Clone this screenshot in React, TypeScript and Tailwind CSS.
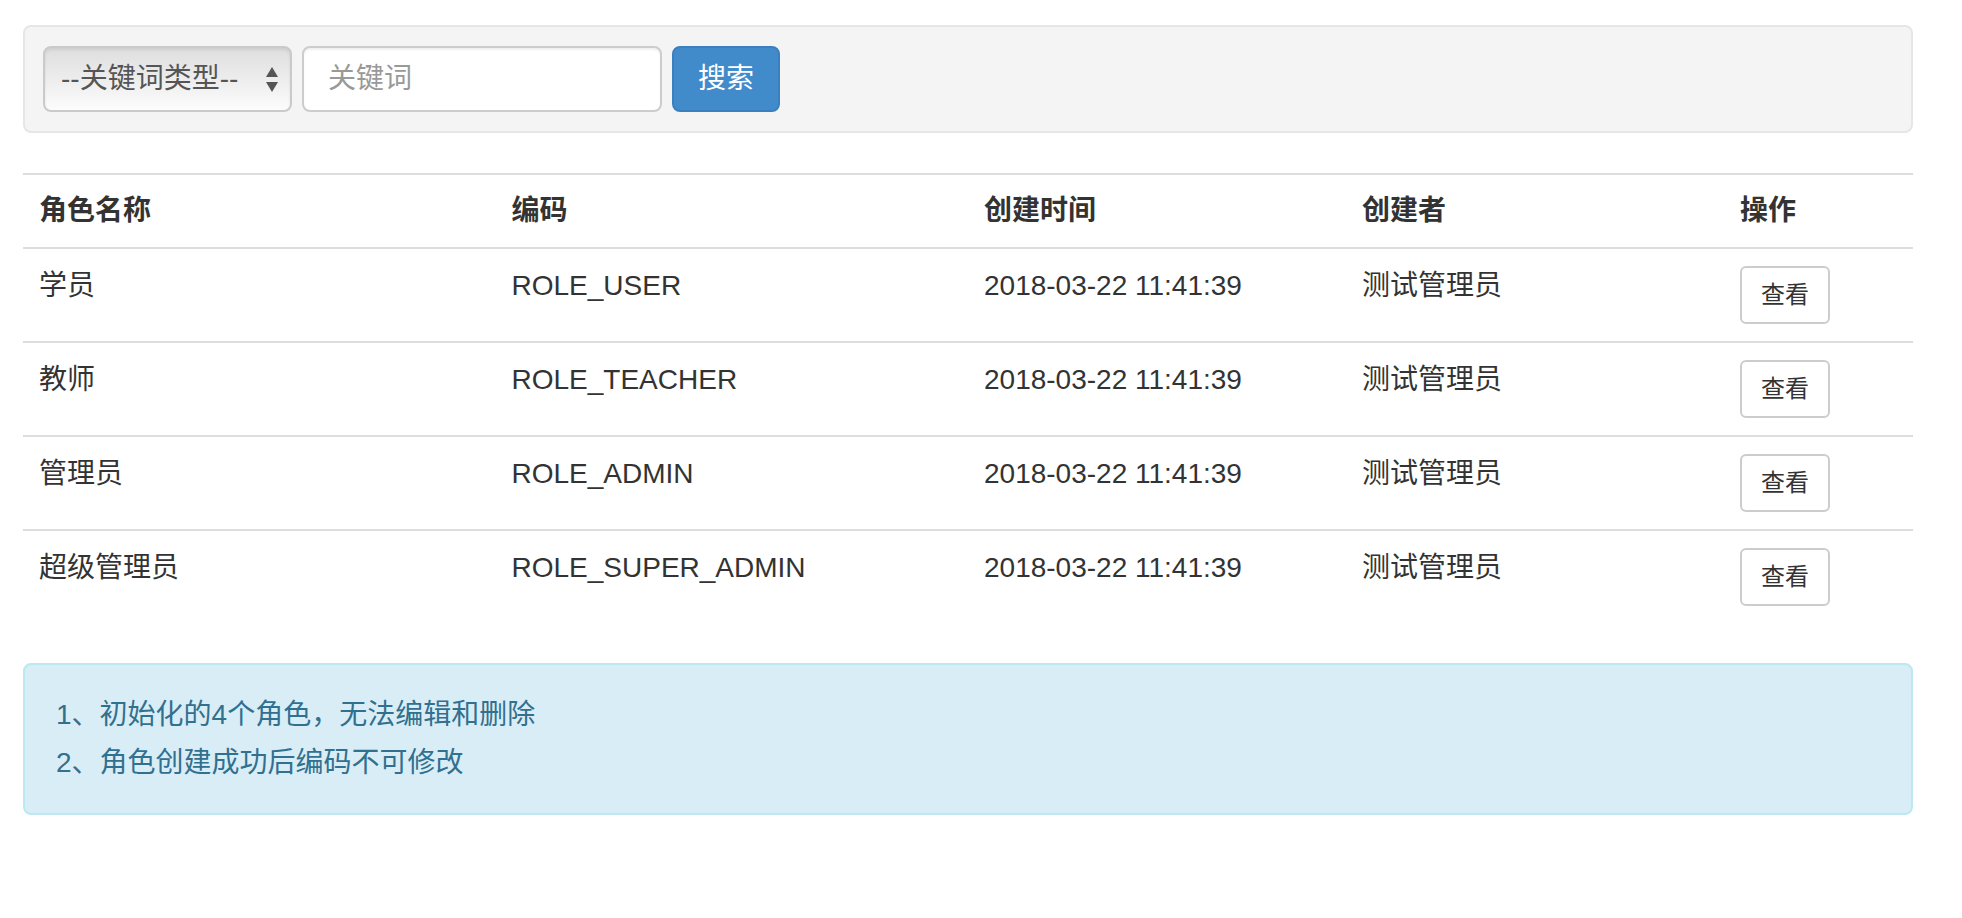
const FONT = {
  fontFamily: '"Liberation Sans", "Noto Sans CJK SC", sans-serif',
};

interface Role {
  name: string;
  code: string;
  createdAt: string;
  creator: string;
}

const roles: Role[] = [
  { name: "学员", code: "ROLE_USER", createdAt: "2018-03-22 11:41:39", creator: "测试管理员" },
  { name: "教师", code: "ROLE_TEACHER", createdAt: "2018-03-22 11:41:39", creator: "测试管理员" },
  { name: "管理员", code: "ROLE_ADMIN", createdAt: "2018-03-22 11:41:39", creator: "测试管理员" },
  { name: "超级管理员", code: "ROLE_SUPER_ADMIN", createdAt: "2018-03-22 11:41:39", creator: "测试管理员" },
];

function SearchBar() {
  return (
    <div className="flex items-center gap-[10px] rounded-lg border-2 border-[#e6e6e6] bg-[#f4f4f4] px-[18px] py-[19px]">
      {/* select, drawn like the native mac one */}
      <div className="relative">
        <select
          className="h-[66px] w-[249px] appearance-none rounded-lg border-2 border-[#cacaca] bg-gradient-to-b from-[#dedede] via-[#ededed] to-[#fcfcfc] pl-[16px] text-[28px] text-[#555] shadow-[inset_0_2px_3px_rgba(0,0,0,0.08)] outline-none"
          style={FONT}
          defaultValue=""
        >
          <option value="">--关键词类型--</option>
          <option value="name">角色名称</option>
          <option value="code">编码</option>
        </select>
        <svg
          className="pointer-events-none absolute right-[14px] top-[21px]"
          width="12"
          height="25"
          viewBox="0 0 12 25"
        >
          <path d="M6 0 L12 10 L0 10 Z" fill="#555" />
          <path d="M0 15 L12 15 L6 25 Z" fill="#555" />
        </svg>
      </div>
      <input
        type="text"
        placeholder="关键词"
        className="h-[66px] w-[360px] rounded-lg border-2 border-[#cccccc] bg-white px-[24px] text-[28px] text-[#555] shadow-[inset_0_2px_2px_rgba(0,0,0,0.06)] outline-none placeholder:text-[#999]"
        style={FONT}
      />
      <button
        type="button"
        className="h-[66px] w-[108px] rounded-lg border-2 border-[#3a80c0] bg-[#428bca] text-[28px] text-white"
        style={FONT}
      >
        搜索
      </button>
    </div>
  );
}

function RoleTable() {
  return (
    <table className="mt-[40px] w-full table-fixed border-collapse text-[28px] leading-[40px] text-[#333]">
      <colgroup>
        <col className="w-[25%]" />
        <col className="w-[25%]" />
        <col className="w-[20%]" />
        <col className="w-[20%]" />
        <col className="w-[10%]" />
      </colgroup>
      <thead>
        <tr className="border-y-2 border-[#dddddd]">
          <th className="p-4 text-left font-bold">角色名称</th>
          <th className="p-4 text-left font-bold">编码</th>
          <th className="p-4 text-left font-bold">创建时间</th>
          <th className="p-4 text-left font-bold">创建者</th>
          <th className="p-4 text-left font-bold">操作</th>
        </tr>
      </thead>
      <tbody>
        {roles.map((r, i) => (
          <tr key={r.code} className={i > 0 ? "border-t-2 border-[#dddddd]" : ""}>
            <td className="px-4 py-[17px] align-top">{r.name}</td>
            <td className="px-4 py-[17px] align-top">{r.code}</td>
            <td className="px-4 py-[17px] align-top">{r.createdAt}</td>
            <td className="px-4 py-[17px] align-top">{r.creator}</td>
            <td className="px-4 py-[17px] align-top">
              <button
                type="button"
                className="block h-[58px] w-[90px] rounded-md border-2 border-[#cccccc] bg-white text-[24px] leading-none text-[#333]"
              >
                查看
              </button>
            </td>
          </tr>
        ))}
      </tbody>
    </table>
  );
}

export default function App() {
  return (
    <div className="min-h-screen bg-white" style={FONT}>
      <div className="ml-[23px] w-[1890px] pt-[25px]">
        <SearchBar />
        <RoleTable />
        <div className="mt-[40px] rounded-lg border-2 border-[#bce8f1] bg-[#d9edf7] px-[31px] py-[30px] text-[28px] leading-[40px] text-[#31708f]">
          <p>1、初始化的4个角色，无法编辑和删除</p>
          <p className="mt-2">2、角色创建成功后编码不可修改</p>
        </div>
      </div>
    </div>
  );
}
